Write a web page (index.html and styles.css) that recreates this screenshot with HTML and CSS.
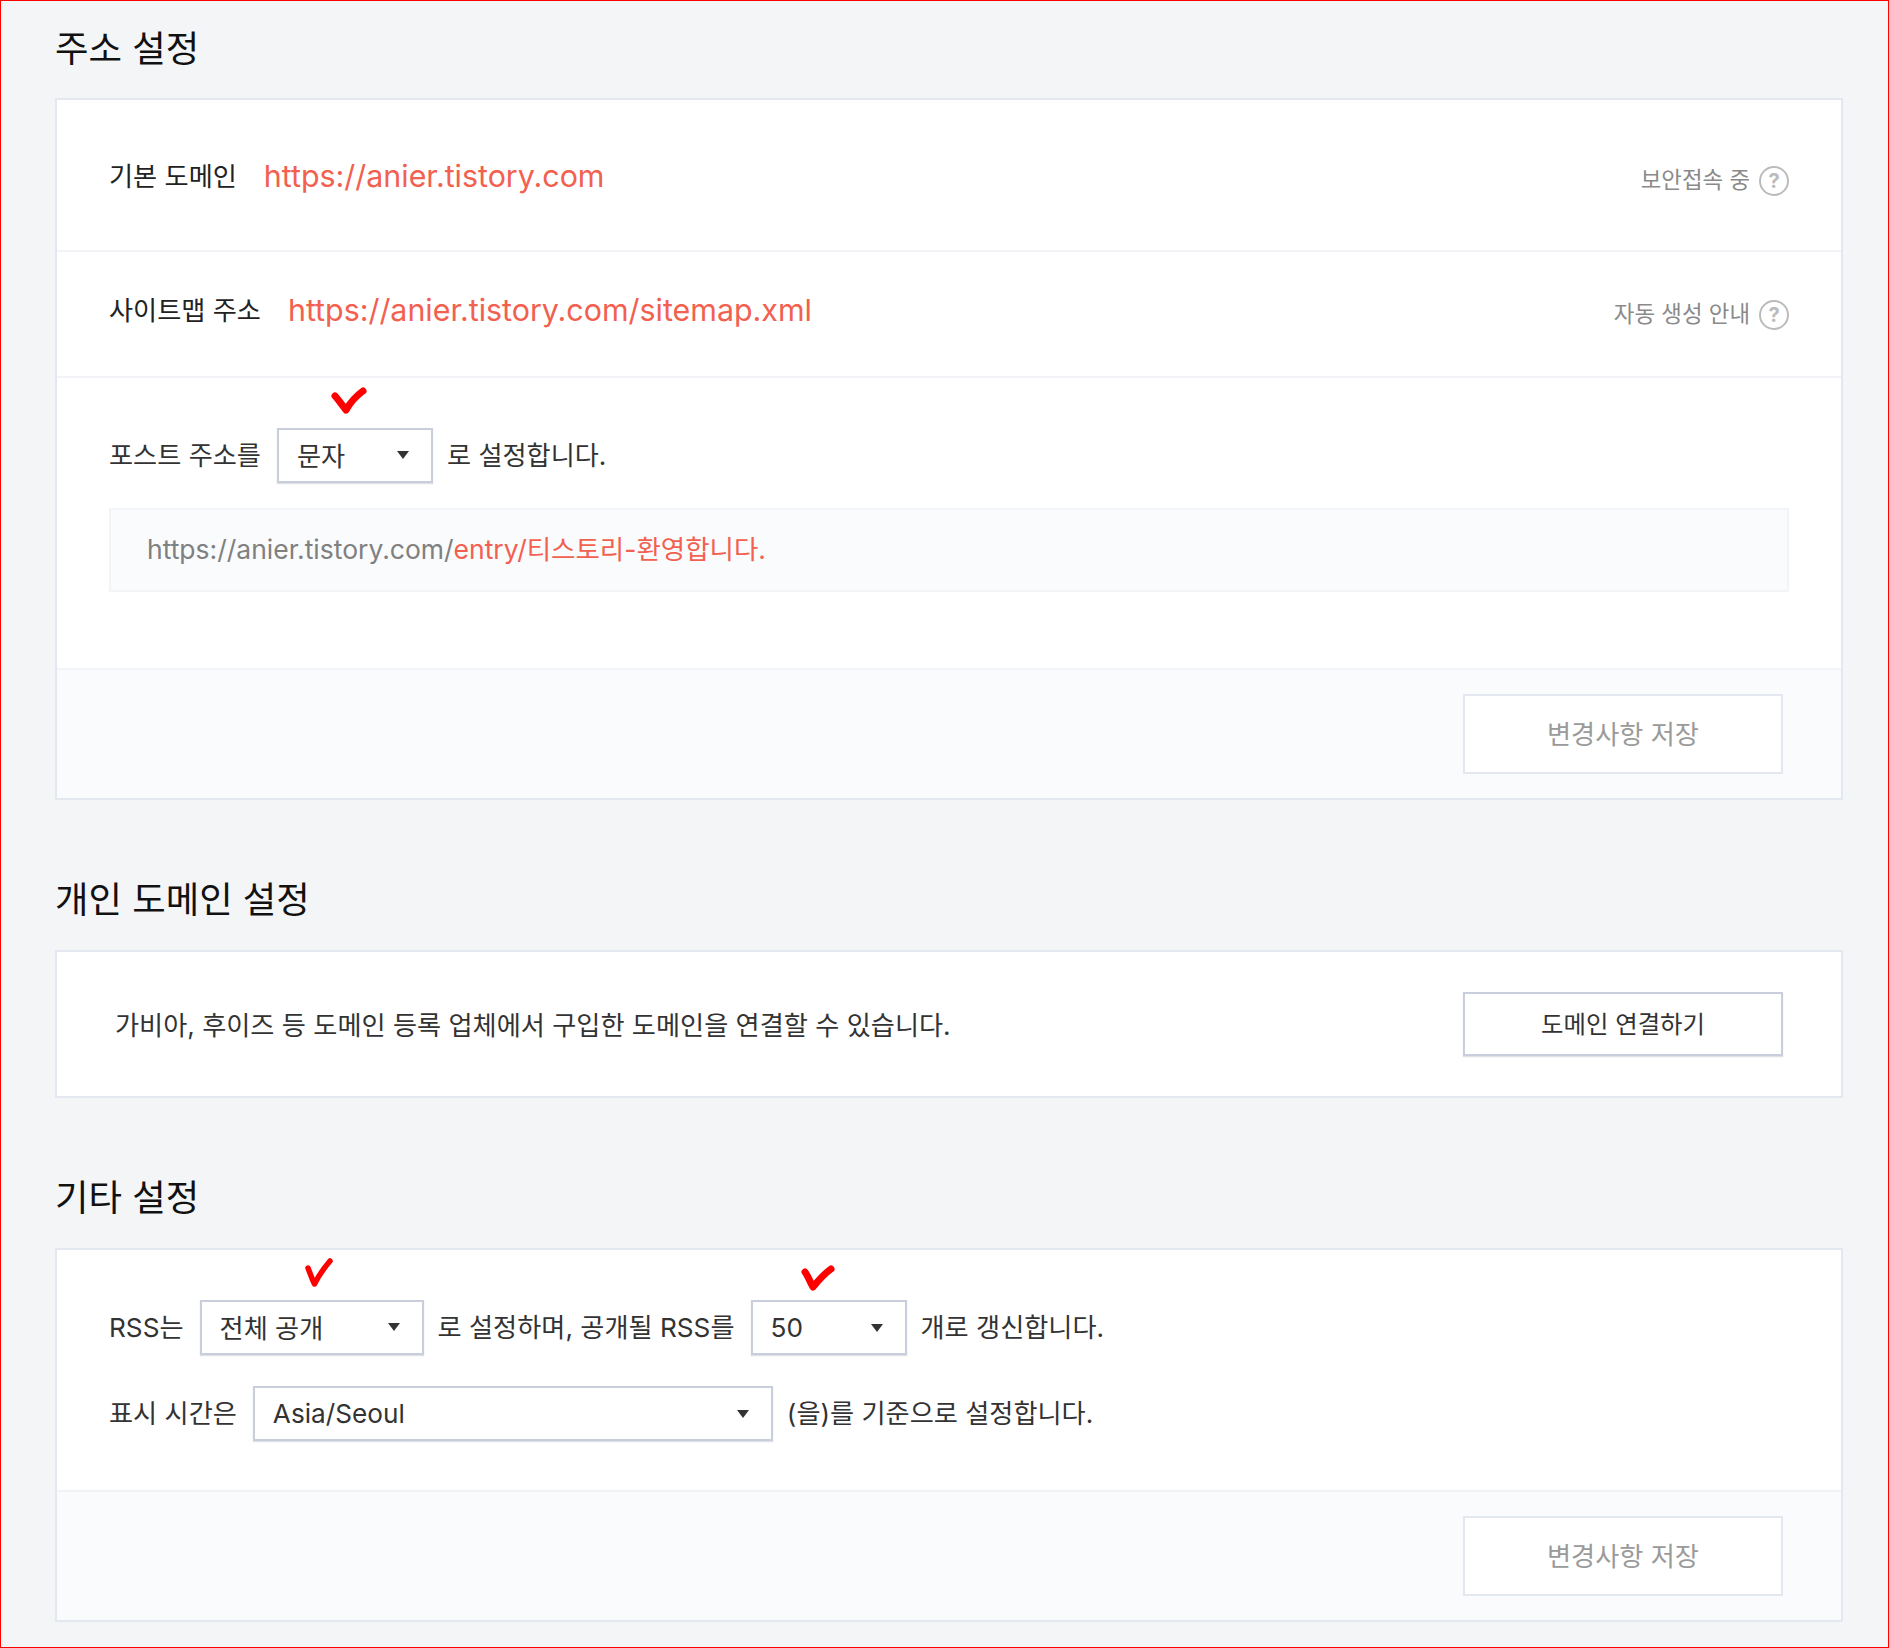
FILE: index.html
```html
<!DOCTYPE html>
<html lang="ko">
<head>
<meta charset="utf-8">
<title>주소 설정</title>
<link rel="stylesheet" href="styles.css">
</head>
<body>
<main class="page">
  <section class="section section-first">
    <h2 class="title title-first">주소 설정</h2>
    <div class="card">
      <div class="row row-domain">
        <div class="pair"><span class="label">기본 도메인</span><a class="link">https://anier.tistory.com</a></div>
        <div class="hint"><span>보안접속 중</span><span class="help">?</span></div>
      </div>
      <div class="row row-sitemap">
        <div class="pair"><span class="label">사이트맵 주소</span><a class="link">https://anier.tistory.com/sitemap.xml</a></div>
        <div class="hint"><span>자동 생성 안내</span><span class="help">?</span></div>
      </div>
      <div class="body body-post">
        <div class="line">
          <span class="label">포스트 주소를</span>
          <div class="select select-post"><span>문자</span><i class="arrow"></i>
            <svg class="check check-a" viewBox="0 0 36 27"><path d="M4 9 C7 12 11 18 15 23 C19 16 25 9 32 4"/></svg>
          </div>
          <span class="label">로 설정합니다.</span>
        </div>
        <div class="preview"><span>https://anier.tistory.com/<em>entry/티스토리-환영합니다.</em></span></div>
      </div>
      <div class="footer"><button class="btn btn-off">변경사항 저장</button></div>
    </div>
  </section>

  <section class="section">
    <h2 class="title">개인 도메인 설정</h2>
    <div class="card">
      <div class="row row-connect">
        <span class="label label-connect">가비아, 후이즈 등 도메인 등록 업체에서 구입한 도메인을 연결할 수 있습니다.</span>
        <button class="btn btn-on">도메인 연결하기</button>
      </div>
    </div>
  </section>

  <section class="section">
    <h2 class="title">기타 설정</h2>
    <div class="card">
      <div class="body body-etc">
        <div class="line">
          <span class="label">RSS는</span>
          <div class="select select-rss"><span>전체 공개</span><i class="arrow"></i>
            <svg class="check check-b" viewBox="0 0 30 31"><path d="M4 11 C6 16 8 22 10.500 27 C14 20 20 11 26 4"/></svg>
          </div>
          <span class="label">로 설정하며, 공개될 RSS를</span>
          <div class="select select-count"><span>50</span><i class="arrow"></i>
            <svg class="check check-c" viewBox="0 0 34 26"><path d="M4 7 C7 11 9 17 12 22 C17 16 23 9 30 4"/></svg>
          </div>
          <span class="label">개로 갱신합니다.</span>
        </div>
        <div class="line">
          <span class="label">표시 시간은</span>
          <div class="select select-zone"><span>Asia/Seoul</span><i class="arrow"></i></div>
          <span class="label">(을)를 기준으로 설정합니다.</span>
        </div>
      </div>
      <div class="footer"><button class="btn btn-off">변경사항 저장</button></div>
    </div>
  </section>
</main>
</body>
</html>
```

FILE: styles.css
```css
* { box-sizing: border-box; }

html, body { margin: 0; padding: 0; }

body {
  font-family: Inter, "Noto Sans CJK KR", sans-serif;
  color: #333;
  background: #f4f5f7;
}

.page {
  height: 1648px;
  width: 1889px;
  border: 1px solid #f00;
  padding: 22px 45px 0 54px;
  background: #f4f5f7;
  overflow: hidden;
}

.section { margin-top: 74px; }
.section-first { margin-top: 0; }

.title {
  margin: 0 0 24px;
  font-size: 36.400px;
  line-height: 52px;
  font-weight: 400;
  color: #111;
}

.title-first { margin-bottom: 23px; }

.card {
  border: 2px solid #e3e7ef;
  background: #fff;
}

.row {
  display: flex;
  align-items: center;
  justify-content: space-between;
  padding: 0 52px;
}

.row-domain, .row-sitemap { border-bottom: 2px solid #f2f3f7; }
.row-domain { height: 152px; padding-top: 4px; }
.row-sitemap { height: 126px; padding-bottom: 6px; }
.row-connect { height: 144px; padding: 0 58px 1px 58px; }

.pair { display: flex; align-items: center; gap: 27px; }

.label {
  font-size: 26.200px;
  line-height: 38px;
  color: #333;
  white-space: pre;
}

.label-connect { margin-top: 4px; }

.row-domain .label, .row-sitemap .label { color: #222; }

.link {
  font-size: 30.400px;
  line-height: 40px;
  color: #f2604f;
  margin-top: -2px;
}

.hint {
  display: flex;
  align-items: center;
  gap: 9px;
  margin-top: 2px;
  font-size: 22.400px;
  color: #8a8a8a;
}

.help {
  width: 30px;
  height: 30px;
  border: 2px solid #bbb;
  border-radius: 50%;
  display: flex;
  align-items: center;
  justify-content: center;
  font-size: 20px;
  font-weight: 700;
  color: #bbb;
  margin-top: 6px;
}

.body-post { padding: 50px 52px 76px; }
.body-etc { padding: 50px 52px 49px; display: flex; flex-direction: column; gap: 31px; }

.line {
  display: flex;
  align-items: center;
  gap: 16px;
}

.select {
  position: relative;
  height: 55px;
  margin-right: -2px;
  display: flex;
  align-items: center;
  justify-content: space-between;
  padding: 0 22px 2px 18px;
  background: #fff;
  border: 2px solid #c8cedc;
  box-shadow: 0 1px 1px rgba(120, 130, 150, 0.25);
  font-size: 26.200px;
  color: #333;
}

.select-post { width: 156px; }
.select-rss { width: 224px; }
.select-count { width: 156px; padding-bottom: 0; }
.select-zone { width: 520px; padding-bottom: 0; }

.arrow {
  width: 0;
  height: 0;
  border-left: 6.500px solid transparent;
  border-right: 6.500px solid transparent;
  border-top: 8px solid #333;
}

.check {
  position: absolute;
  fill: none;
  stroke: #f00;
  stroke-width: 7;
  stroke-linecap: round;
  stroke-linejoin: round;
}

.check-a { width: 36px; height: 27px; left: 52px; top: -43px; }
.check-b { width: 30px; height: 31px; left: 102px; top: -45px; stroke-width: 5.500; }
.check-c { width: 34px; height: 26px; left: 48px; top: -37px; }

.preview {
  margin-top: 25px;
  height: 84px;
  padding: 0 0 6px 36px;
  display: flex;
  align-items: center;
  border: 2px solid #f3f4f8;
  background: #fafbfd;
  font-size: 26.500px;
  color: #808080;
}

.preview em { font-style: normal; color: #f2604f; }

.footer {
  display: flex;
  justify-content: flex-end;
  padding: 24px 58px 24px;
  border-top: 2px solid #f2f3f7;
  background: #fafbfd;
}

.btn {
  width: 320px;
  font-family: inherit;
  font-size: 26.200px;
  background: #fff;
  padding: 0 0 3px;
}

.btn-off {
  height: 80px;
  border: 2px solid #e3e7ef;
  color: #9a9a9a;
}

.btn-on {
  height: 64px;
  border: 2px solid #c8cedc;
  box-shadow: 0 1px 1px rgba(120, 130, 150, 0.25);
  color: #333;
  font-size: 24.400px;
}
```
